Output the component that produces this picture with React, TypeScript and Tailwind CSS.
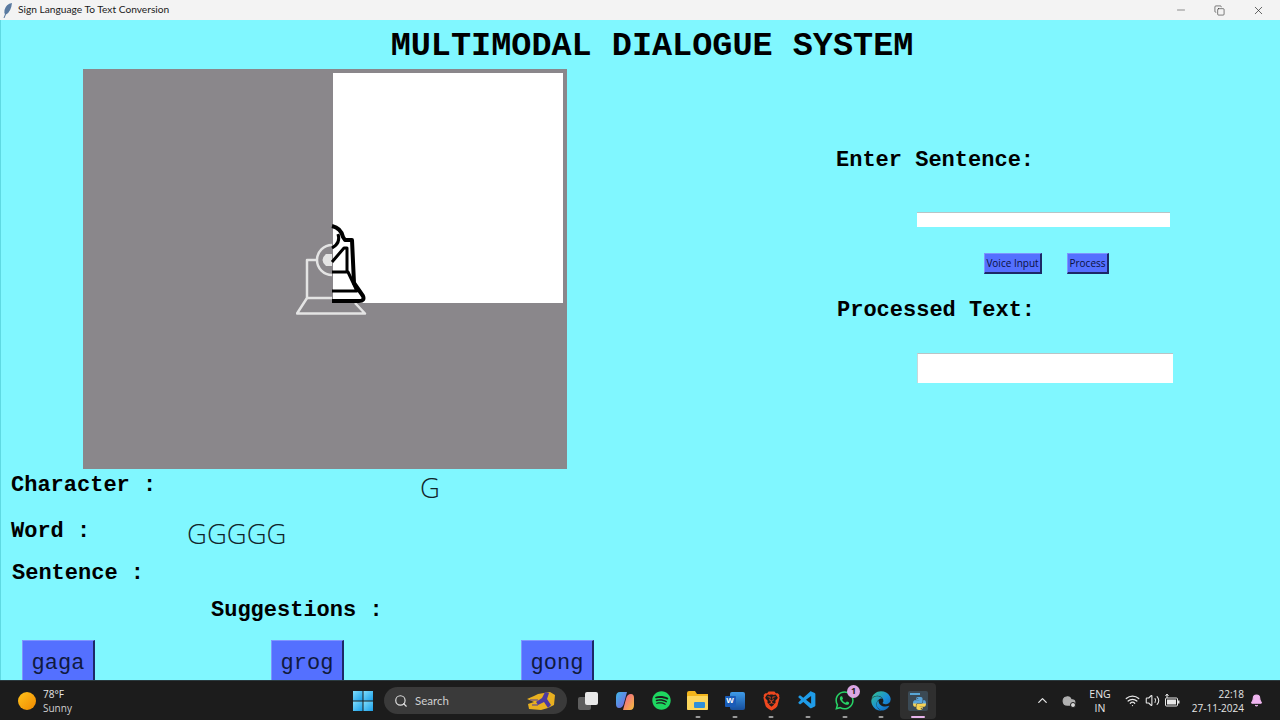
import { Bell, ChevronUp, Cloud, Copy, Minus, Search, Volume2, Wifi, X } from 'lucide-react';
import type { ReactNode } from 'react';
import { FaEdge, FaPython, FaSpotify, FaWhatsapp } from 'react-icons/fa';
import { SiBrave } from 'react-icons/si';
import { VscVscode } from 'react-icons/vsc';

const labelClass = "font-['Liberation_Mono',monospace] font-bold text-[22px] leading-[34px] text-black whitespace-pre";
const readoutClass = "font-['Open_Sans',sans-serif] font-light text-[27.5px] leading-[38px] text-[#10242a]";
const suggestionClass =
  "w-[73px] h-[46px] bg-[#5470ff] border-t border-l border-t-[#7f95ff] border-l-[#7f95ff] border-r-2 border-r-[#1c2a66] font-['Liberation_Mono',monospace] text-[22px] text-[#101a40]";
const smallButtonClass =
  "h-[21px] bg-[#5470ff] border-t border-l border-t-[#7f95ff] border-l-[#7f95ff] border-r-2 border-b-2 border-r-[#1c2a66] border-b-[#1c2a66] font-['Open_Sans',sans-serif] text-[10px] text-[#0a1140]";

function SignPreview() {
  return (
    <svg className="absolute left-[213px] top-[153px] w-[72px] h-[95px]" viewBox="297 222 72 95" fill="none">
      {/* grey half of the hand outline */}
      <g stroke="#e4e4e4" strokeWidth="2.5" strokeLinejoin="round">
        <path d="M333 313.5H298L308 298V260H318" />
        <path d="M308 298H333" />
        <path d="M333 245A15 15 0 0 0 333 275" />
        <path d="M356 303L366 313.5H333" />
      </g>
      <path d="M333 254H327Q320 260 327 266H333Z" fill="#e4e4e4" />
      {/* black half on the white box */}
      <g stroke="#000" strokeWidth="3" strokeLinejoin="round">
        <path d="M333 226Q342 228 344 237L346 240H353L355 283L364 296Q366 301 360 301H333" strokeWidth="4" />
        <path d="M339 234Q342 243 333 248" />
        <path d="M333 262L345 248H348V272" />
        <path d="M333 272H349L358 291H333" />
      </g>
    </svg>
  );
}

function TaskIcon({ children, open, active }: { children: ReactNode; open?: boolean; active?: boolean }) {
  return (
    <div className={`relative w-[36.7px] h-[36px] flex items-center justify-center rounded ${active ? 'bg-[#2f2f2f]' : ''}`}>
      {children}
      {open && <span className="absolute bottom-[1px] left-1/2 -translate-x-1/2 w-[5px] h-[2px] rounded bg-[#9a9a9a]" />}
      {active && <span className="absolute bottom-[1px] left-1/2 -translate-x-1/2 w-[14px] h-[2px] rounded bg-[#e8b4ec]" />}
    </div>
  );
}

function WindowsLogo() {
  return (
    <svg className="w-[20px] h-[20px]" viewBox="0 0 20 20">
      <defs>
        <linearGradient id="winPane" x1="0" y1="0" x2="1" y2="1">
          <stop offset="0" stopColor="#7fdcfb" />
          <stop offset="1" stopColor="#1a9fe8" />
        </linearGradient>
      </defs>
      <rect x="0" y="0" width="9.5" height="9.5" fill="url(#winPane)" />
      <rect x="10.5" y="0" width="9.5" height="9.5" fill="url(#winPane)" />
      <rect x="0" y="10.5" width="9.5" height="9.5" fill="url(#winPane)" />
      <rect x="10.5" y="10.5" width="9.5" height="9.5" fill="url(#winPane)" />
    </svg>
  );
}

function Taskbar() {
  return (
    <div className="h-[40px] bg-[#1c1c1c] border-t border-[#2b3a3e] flex items-center font-['Open_Sans',sans-serif] text-[#e6e6e6]">
      {/* weather */}
      <div className="w-[345px] pl-[18px] flex items-center gap-[7px]">
        <div className="w-[18px] h-[18px] rounded-full bg-gradient-to-br from-[#ffc21a] to-[#f08a00]" />
        <div className="text-[10px] leading-[14px]">
          <div>78°F</div>
          <div className="text-[#cfcfcf]">Sunny</div>
        </div>
      </div>

      <div className="w-[36px] flex justify-center">
        <WindowsLogo />
      </div>

      {/* search */}
      <div className="ml-[3px] w-[183px] h-[27px] rounded-full bg-[#3a3a3a] flex items-center pl-[10px] pr-[11px]">
        <Search className="w-[14px] h-[14px] text-[#e0e0e0]" strokeWidth={2} />
        <span className="ml-[7px] font-['Lato',sans-serif] text-[11.5px] text-[#d0d0d0]">Search</span>
        <svg className="ml-auto w-[30px] h-[20px]" viewBox="0 0 30 20">
          <path d="M1 8L8 5L12 3L24 1L29 4L28 14L22 17L15 19L3 18L2 13L8 11Z" fill="#e8b020" />
          <path d="M19 1L23 2L21 8L25 14L22 17L18 11L12 14L10 11L16 7Z" fill="#4b3aa0" />
          <path d="M4 9H12M6 14H12" stroke="#4b3aa0" strokeWidth="1" />
        </svg>
      </div>

      {/* pinned apps */}
      <div className="ml-[2.5px] flex items-center">
        <TaskIcon>
          <div className="relative w-[20px] h-[18px]">
            <div className="absolute left-0 bottom-0 w-[13px] h-[13px] rounded-[2px] bg-[#5e5e5e]" />
            <div className="absolute right-0 top-0 w-[13px] h-[13px] rounded-[2px] bg-[#e8e8e8]" />
          </div>
        </TaskIcon>
        <TaskIcon>
          <svg className="w-[20px] h-[20px]" viewBox="0 0 20 20">
            <defs>
              <linearGradient id="copilotA" x1="0" y1="0" x2="1" y2="1">
                <stop offset="0" stopColor="#3fb8e8" />
                <stop offset="1" stopColor="#7d5be0" />
              </linearGradient>
              <linearGradient id="copilotB" x1="0" y1="0" x2="1" y2="1">
                <stop offset="0" stopColor="#f0569a" />
                <stop offset="1" stopColor="#f5c13a" />
              </linearGradient>
            </defs>
            <path d="M5 1H12L9 12Q8 17 4 17Q1 17 1 13V6Q1 1 5 1Z" fill="url(#copilotA)" />
            <path d="M15 19H8L11 8Q12 3 16 3Q19 3 19 7V14Q19 19 15 19Z" fill="url(#copilotB)" />
          </svg>
        </TaskIcon>
        <TaskIcon>
          <FaSpotify className="w-[19px] h-[19px] text-[#1ed760]" />
        </TaskIcon>
        <TaskIcon open>
          <svg className="w-[21px] h-[19px]" viewBox="0 0 21 19">
            <path d="M0 2Q0 0 2 0H8L10 3H21V17Q21 19 19 19H2Q0 19 0 17Z" fill="#f2b51c" />
            <rect x="0" y="5" width="21" height="14" rx="1" fill="#fcd65c" />
            <rect x="7" y="11" width="11" height="6" rx="1" fill="#2f8fd8" />
          </svg>
        </TaskIcon>
        <TaskIcon open>
          <div className="relative w-[20px] h-[18px]">
            <div className="absolute right-0 top-0 w-[15px] h-[18px] rounded-[2px] bg-gradient-to-b from-[#3f9be8] to-[#174f9e]" />
            <div className="absolute left-0 top-[4px] w-[11px] h-[11px] rounded-[1px] bg-[#1a5cb8] flex items-center justify-center font-['Liberation_Sans',sans-serif] font-bold text-[8px] text-white">
              W
            </div>
          </div>
        </TaskIcon>
        <TaskIcon open>
          <SiBrave className="w-[19px] h-[20px] text-[#f0481f]" />
        </TaskIcon>
        <TaskIcon open>
          <VscVscode className="w-[21px] h-[21px] text-[#1f9ce8]" />
        </TaskIcon>
        <TaskIcon open>
          <FaWhatsapp className="w-[21px] h-[21px] text-[#27d366]" />
          <span className="absolute top-[2px] right-[3px] w-[13px] h-[13px] rounded-full bg-[#dba6e4] flex items-center justify-center text-[9px] font-bold text-[#1c1c1c]">
            1
          </span>
        </TaskIcon>
        <TaskIcon open>
          <svg className="w-0 h-0 absolute">
            <defs>
              <linearGradient id="edgeFill" x1="0" y1="0" x2="1" y2="1">
                <stop offset="0" stopColor="#35c48c" />
                <stop offset="0.55" stopColor="#1a8fd8" />
                <stop offset="1" stopColor="#0f5fb0" />
              </linearGradient>
            </defs>
          </svg>
          <FaEdge className="w-[20px] h-[20px]" fill="url(#edgeFill)" />
        </TaskIcon>
        <TaskIcon active>
          <div className="relative w-[20px] h-[20px] rounded-[2px] bg-[#3b4a55]">
            <div className="absolute left-[2px] top-[2px] w-[10px] h-[2px] bg-[#58a6d6]" />
            <svg className="w-0 h-0 absolute">
              <defs>
                <linearGradient id="pyFill" x1="0" y1="0" x2="0" y2="1">
                  <stop offset="0.45" stopColor="#5aa6dc" />
                  <stop offset="0.55" stopColor="#f7d354" />
                </linearGradient>
              </defs>
            </svg>
            <FaPython className="absolute left-[4px] top-[5px] w-[15px] h-[15px]" fill="url(#pyFill)" />
          </div>
        </TaskIcon>
      </div>

      {/* tray */}
      <div className="ml-auto flex items-center text-[#e6e6e6]">
        <ChevronUp className="w-[15px] h-[15px]" strokeWidth={2} />
        <div className="relative ml-[12px] w-[14px] h-[14px]">
          <Cloud className="w-[14px] h-[14px] text-[#b0b0b0]" fill="#b0b0b0" />
          <span className="absolute right-0 bottom-0 w-[6px] h-[6px] rounded-full bg-[#d8d8d8] border border-[#1c1c1c]" />
        </div>
        <div className="ml-[12px] w-[24px] text-center text-[10.5px] leading-[14px]">
          <div>ENG</div>
          <div>IN</div>
        </div>
        <Wifi className="ml-[13px] w-[15px] h-[15px]" strokeWidth={2} />
        <Volume2 className="ml-[5px] w-[15px] h-[15px]" strokeWidth={1.75} />
        <svg className="ml-[4px] w-[16px] h-[16px]" viewBox="0 0 16 16" fill="none">
          <rect x="1.5" y="5" width="12" height="8" rx="1" stroke="#e6e6e6" strokeWidth="1" />
          <rect x="3" y="6.5" width="9" height="5" fill="#e6e6e6" />
          <rect x="14" y="7.5" width="1.5" height="3" fill="#e6e6e6" />
          <path d="M3 1V5M1.5 3L3 1L4.5 3" stroke="#e6e6e6" strokeWidth="1" />
        </svg>
        <div className="w-[64px] text-right text-[10px] leading-[14px]">
          <div>22:18</div>
          <div>27-11-2024</div>
        </div>
        <Bell className="ml-[6px] mr-[17px] w-[13px] h-[13px] text-[#efb5ef]" fill="#efb5ef" />
      </div>
    </div>
  );
}

export default function App() {
  return (
    <div className="w-[1280px] h-[720px] overflow-hidden flex flex-col">
      {/* title bar */}
      <div className="h-[20px] bg-[#f3f3f3] flex items-center">
        <svg className="ml-[3px] w-[10px] h-[15px]" viewBox="0 0 10 15">
          <path d="M9 0Q3 1 1.5 7Q1 10 2 11L0.5 15L1.5 15L3 11.5Q8 9 9 0Z" fill="#5a7aa0" />
        </svg>
        <span className="ml-[5px] font-['Lato',sans-serif] text-[10.2px] text-[#1a1a1a]">Sign Language To Text Conversion</span>
        <div className="ml-auto flex items-center text-[#222]">
          <Minus className="w-[12px] h-[12px]" strokeWidth={1} />
          <Copy className="ml-[27px] w-[11px] h-[11px]" strokeWidth={1.25} />
          <X className="ml-[27px] mr-[15px] w-[13px] h-[13px]" strokeWidth={1.25} />
        </div>
      </div>

      {/* tk window */}
      <div className="h-[660px] bg-[#80f7ff] shadow-[inset_1px_0_0_#5fd9e2] overflow-hidden">
        <h1 className="h-[49px] pl-[24px] text-center font-['Liberation_Mono',monospace] font-bold text-[33.5px] leading-[52px] text-black">
          MULTIMODAL DIALOGUE SYSTEM
        </h1>

        <div className="flex">
          <div className="w-[620px]">
            <div className="relative ml-[83px] w-[484px] h-[400px] bg-[#8a878b] flex justify-end pt-[4px] pr-[4px]">
              <div className="w-[230px] h-[230px] bg-white" />
              <SignPreview />
            </div>

            <div className="flex h-[46px]">
              <div className={`${labelClass} w-[420px] pl-[11px]`}>Character :</div>
              <div className={readoutClass}>G</div>
            </div>
            <div className="flex h-[41px]">
              <div className={`${labelClass} w-[187px] pl-[11px]`}>Word :</div>
              <div className={readoutClass}>GGGGG</div>
            </div>
            <div className={`${labelClass} pl-[12px] !leading-[36px]`}>Sentence :</div>
            <div className={`${labelClass} mt-[2px] pl-[211px]`}>Suggestions :</div>
            <div className="mt-[12px] pl-[22px] grid grid-cols-[249px_250px_73px]">
              <button className={suggestionClass}>gaga</button>
              <button className={suggestionClass}>grog</button>
              <button className={suggestionClass}>gong</button>
            </div>
          </div>

          <div className="pl-[216px] pt-[75px]">
            <div className={labelClass}>Enter Sentence:</div>
            <div className="mt-[34px] ml-[81px] w-[253px] h-[15px] bg-white border-t border-t-[#b8c4c6]" />
            <div className="mt-[26px] ml-[148px] flex gap-[25px]">
              <button className={`${smallButtonClass} w-[58px]`}>Voice Input</button>
              <button className={`${smallButtonClass} w-[42px]`}>Process</button>
            </div>
            <div className={`${labelClass} mt-[20px] pl-[1px]`}>Processed Text:</div>
            <div className="mt-[25px] ml-[81px] w-[256px] h-[30px] bg-white border-t border-l border-t-[#b8c4c6] border-l-[#c8d8da]" />
          </div>
        </div>
      </div>

      <Taskbar />
    </div>
  );
}
